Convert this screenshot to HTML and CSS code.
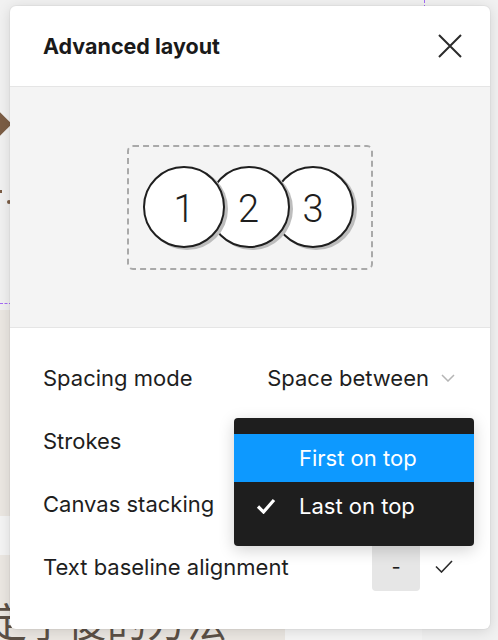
FILE: index.html
```html
<!DOCTYPE html>
<html>
<head>
<meta charset="utf-8">
<link rel="stylesheet" href="styles.css">
</head>
<body>
<div class="canvas">
  <div class="bg-beige bg-left"></div>
  <div class="bg-light bg-left-gap"></div>
  <div class="bg-beige bg-bottom"></div>
  <div class="bg-mid bg-bottom-mid"></div>
  <div class="diamond"></div>
  <div class="dot dot1"></div>
  <div class="dot dot2"></div>
  <div class="purple-h"></div>
  <div class="purple-v"></div>
  <div class="cjk">定了後的方法</div>
</div>

<div class="panel">
  <div class="header">
    <h1 class="title">Advanced layout</h1>
    <svg class="close" width="24" height="24" viewBox="0 0 24 24"><path d="M1 1L23 23M23 1L1 23" stroke="#2b2b2b" stroke-width="2" fill="none"/></svg>
  </div>
  <div class="preview">
    <div class="frame">
      <div class="circle c1">1</div>
      <div class="circle c2">2</div>
      <div class="circle c3">3</div>
    </div>
  </div>
  <div class="rows">
    <div class="row">
      <span class="label">Spacing mode</span>
      <span class="select">Space between
        <svg class="chev" width="14" height="8" viewBox="0 0 14 8"><path d="M1 1L7 7L13 1" stroke="#b5b5b5" stroke-width="1.5" fill="none"/></svg>
      </span>
    </div>
    <div class="row"><span class="label">Strokes</span></div>
    <div class="row"><span class="label">Canvas stacking</span></div>
    <div class="row">
      <span class="label">Text baseline alignment</span>
      <span class="toggles">
        <span class="tbtn active">-</span>
        <span class="tbtn"><svg width="18" height="13" viewBox="0 0 18 13"><path d="M1 6.5L6.5 12L17 1" stroke="#2b2b2b" stroke-width="1.6" fill="none"/></svg></span>
      </span>
    </div>
  </div>
  <div class="menu">
    <div class="item selected">First on top</div>
    <div class="item"><svg class="mcheck" width="20" height="16" viewBox="0 0 20 16"><path d="M2 8.5L7.5 14L18 2" stroke="#fff" stroke-width="3.2" fill="none"/></svg>Last on top</div>
  </div>
</div>
</body>
</html>
```
FILE: styles.css
```css
html, body {
  margin: 0;
  padding: 0;
}
body {
  width: 498px;
  height: 640px;
  overflow: hidden;
  position: relative;
  background: #f1f1f1;
  padding: 6px 0 0 10px;
  box-sizing: border-box;
  font-family: Inter, "Liberation Sans", sans-serif;
}
.canvas {
  position: absolute;
  inset: 0;
  z-index: 0;
}
.bg-beige { position: absolute; background: #ebe7e2; }
.bg-light { position: absolute; background: #f4f4f4; }
.bg-mid { position: absolute; background: #f5f5f5; }
.bg-left { left: 0; top: 310px; width: 12px; height: 330px; }
.bg-left-gap { left: 0; top: 516px; width: 12px; height: 39px; }
.bg-bottom { left: 0; top: 600px; width: 285px; height: 40px; }
.bg-bottom-mid { left: 285px; top: 600px; width: 137px; height: 40px; }
.diamond {
  position: absolute;
  left: -22px;
  top: 110px;
  width: 28px;
  height: 28px;
  background: #7b5d45;
  transform: rotate(45deg);
}
.dot { position: absolute; background: #7b5d45; }
.dot1 { left: 0; top: 190px; width: 2px; height: 3px; }
.dot2 { left: 7px; top: 200px; width: 4px; height: 4px; border-radius: 50%; }
.purple-h {
  position: absolute;
  left: 0; top: 303px; width: 12px; height: 0;
  border-top: 1.5px dashed #a46bf5;
}
.purple-v {
  position: absolute;
  left: 424px; top: 0; width: 0; height: 8px;
  border-left: 1.5px dashed #a46bf5;
}
.cjk {
  position: absolute;
  left: -13px;
  top: 600px;
  font-family: "Noto Sans CJK TC", sans-serif;
  font-size: 40px;
  line-height: 1;
  color: #5b5046;
  white-space: nowrap;
}

.panel {
  position: relative;
  z-index: 1;
  width: 480px;
  height: 623px;
  background: #fff;
  border-radius: 6px;
  box-shadow: 0 2px 14px rgba(0,0,0,0.13), 0 0 0 1px rgba(0,0,0,0.03);
  display: flex;
  flex-direction: column;
  color: #1e1e1e;
}
.header {
  height: 80px;
  border-bottom: 1px solid #e5e5e5;
  display: flex;
  align-items: center;
  justify-content: space-between;
  padding: 0 28px 0 33px;
  flex: none;
}
.title {
  margin: 0;
  font-size: 21.5px;
  font-weight: 700;
  color: #1a1a1a;
}
.close { display: block; }
.preview {
  height: 240px;
  background: #f4f4f4;
  border-bottom: 1px solid #e5e5e5;
  display: flex;
  align-items: center;
  justify-content: center;
  flex: none;
}
.frame {
  width: 246px;
  height: 125px;
  box-sizing: border-box;
  border: 2px dashed #a9a9a9;
  border-radius: 6px;
  display: flex;
  align-items: center;
  padding-left: 14px;
}
.circle {
  position: relative;
  width: 82px;
  height: 82px;
  box-sizing: border-box;
  border: 2px solid #1f1f1f;
  border-radius: 50%;
  background: #fff;
  box-shadow: 3px 2px 0 #bdbdbd;
  display: flex;
  align-items: center;
  justify-content: center;
  font-family: Roboto, sans-serif;
  font-weight: 300;
  font-size: 38px;
  color: #1e1e1e;
  padding-top: 3px;
  flex: none;
}
.circle + .circle { margin-left: -17.5px; }
.c1 { z-index: 3; }
.c2 { z-index: 2; }
.c3 { z-index: 1; }

.rows {
  padding-top: 18px;
  display: flex;
  flex-direction: column;
}
.row {
  height: 63px;
  display: flex;
  align-items: center;
  justify-content: space-between;
  padding: 0 22px 0 33px;
  font-size: 22px;
}
.label { color: #1e1e1e; }
.select {
  display: flex;
  align-items: center;
  gap: 12px;
  padding-right: 13px;
  color: #1e1e1e;
}
.chev { display: block; }
.toggles { display: flex; }
.tbtn {
  width: 48px;
  height: 48px;
  display: flex;
  align-items: center;
  justify-content: center;
  border-radius: 4px;
  font-size: 20px;
  color: #1e1e1e;
}
.tbtn.active { background: #e6e6e6; }

.menu {
  position: absolute;
  left: 224px;
  top: 412px;
  width: 240px;
  padding: 16px 0;
  background: #1e1e1e;
  border-radius: 4px;
  box-shadow: 0 4px 16px rgba(0,0,0,0.18);
}
.item {
  height: 48px;
  display: flex;
  align-items: center;
  padding-left: 65px;
  position: relative;
  color: #fff;
  font-size: 22px;
}
.item.selected { background: #0d99ff; }
.mcheck {
  position: absolute;
  left: 22px;
  top: 16px;
}
```
